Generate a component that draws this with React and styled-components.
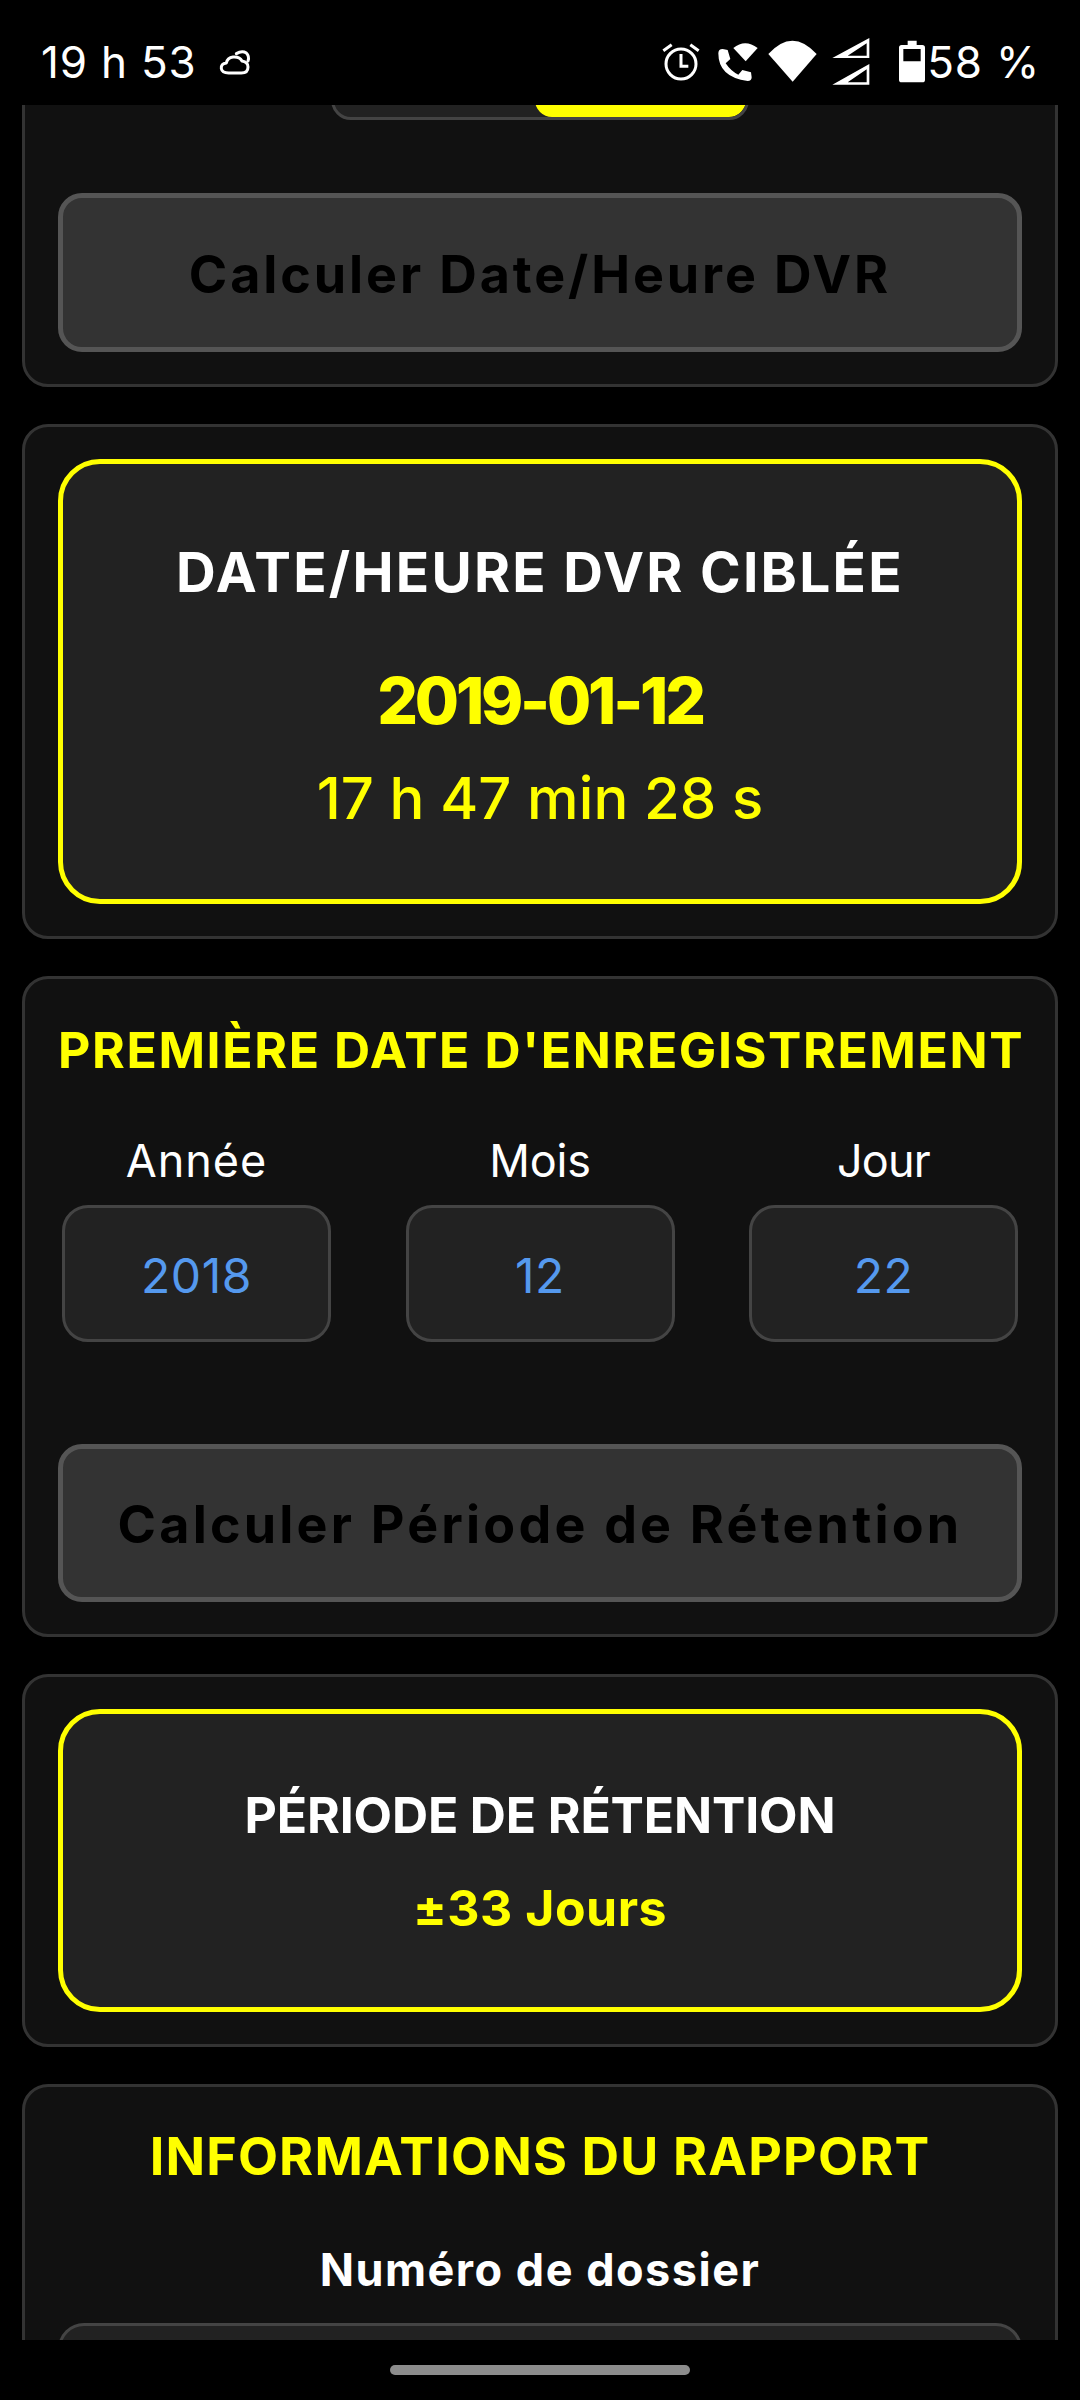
import React from 'react';
import styled, { createGlobalStyle } from 'styled-components';

const Global = createGlobalStyle`
  * { box-sizing: border-box; }
  html, body { margin: 0; padding: 0; background: #000; }
  body { font-family: Inter, "Liberation Sans", sans-serif; color: #fff; }
`;

const Screen = styled.div`
  width: 1080px;
  height: 2400px;
  display: flex;
  flex-direction: column;
  background: #000;
  overflow: hidden;
`;

const StatusBar = styled.header`
  flex: none;
  height: 105px;
  padding: 19px 40px 0 41px;
  display: flex;
  align-items: center;
  justify-content: space-between;
`;

const StatusGroup = styled.div`
  display: flex;
  align-items: center;
`;

const StatusText = styled.span`
  font-size: 44px;
  font-weight: 400;
  line-height: 56px;
  letter-spacing: 0.8px;
  white-space: nowrap;
`;

const StatusIcon = styled.svg`
  flex: none;
  display: block;
  height: ${p => p.$h || 56}px;
  width: ${p => p.$w}px;
  margin-left: ${p => p.$gap || 0}px;
  fill: #fff;
`;

const Scroller = styled.main`
  flex: none;
  height: 2235px;
  overflow: hidden;
`;

const Stack = styled.div`
  margin: -60px 22px 0;
  display: flex;
  flex-direction: column;
  gap: 37px;
`;

const Card = styled.section`
  background: #111;
  border: 3px solid #333;
  border-radius: 26px;
  padding: 32px 33px;
`;

const Toggle = styled.div`
  width: 418px;
  height: 40px;
  margin: 0 auto 73px;
  display: flex;
  justify-content: flex-end;
  background: #222;
  border: 3px solid #444;
  border-radius: 20px;
  overflow: hidden;
`;

const ToggleOn = styled.div`
  width: 211px;
  background: #ff0;
  border-radius: 20px;
`;

const ActionButton = styled.button`
  display: block;
  width: 100%;
  height: ${p => p.$h}px;
  padding: 3px 0 0;
  background: #333;
  border: 5px solid #555;
  border-radius: 24px;
  color: #000;
  font-family: inherit;
  font-size: 52px;
  font-weight: 700;
  letter-spacing: ${p => p.$ls}px;
  white-space: nowrap;
`;

const ResultBox = styled.div`
  background: #222;
  border: 5px solid #ff0;
  border-radius: 42px;
  text-align: center;
  padding: ${p => p.$pad};
`;

const ResultTitle = styled.h2`
  margin: 0;
  font-size: ${p => p.$size}px;
  font-weight: 700;
  line-height: 60px;
  letter-spacing: ${p => p.$ls}px;
  color: #fff;
  white-space: nowrap;
`;

const ResultDate = styled.div`
  margin-top: 59px;
  font-size: 64px;
  font-weight: 800;
  line-height: 80px;
  letter-spacing: -3.2px;
  color: #ff0;
`;

const ResultTime = styled.div`
  margin-top: 22px;
  font-size: 58px;
  font-weight: 500;
  line-height: 70px;
  letter-spacing: 0.1px;
  color: #ff0;
`;

const ResultValue = styled.div`
  margin-top: 33px;
  font-size: 50px;
  font-weight: 700;
  line-height: 60px;
  letter-spacing: 0.5px;
  color: #ff0;
`;

const SectionTitle = styled.h2`
  margin: ${p => p.$top}px 0 0;
  font-size: ${p => p.$size}px;
  font-weight: 700;
  line-height: 60px;
  letter-spacing: ${p => p.$ls}px;
  color: #ff0;
  text-align: center;
  white-space: nowrap;
`;

const DateRow = styled.div`
  margin: 56px 0 102px;
  padding: 0 4px;
  display: grid;
  grid-template-columns: repeat(3, 269px);
  justify-content: space-between;
`;

const Field = styled.div`
  display: flex;
  flex-direction: column;
  align-items: center;
`;

const FieldLabel = styled.label`
  font-size: 45px;
  font-weight: 400;
  line-height: 50px;
  letter-spacing: ${p => p.$ls}px;
  color: #fff;
`;

const ValueInput = styled.div`
  width: 100%;
  height: 137px;
  margin-top: 19px;
  padding-top: 3px;
  display: flex;
  align-items: center;
  justify-content: center;
  background: #222;
  border: 3px solid #444;
  border-radius: 26px;
  color: #5599ee;
  font-size: 48px;
  font-weight: 400;
  letter-spacing: 0.6px;
`;

const ReportLabel = styled.div`
  margin-top: 58px;
  font-size: 45px;
  font-weight: 700;
  line-height: 50px;
  letter-spacing: 1.5px;
  color: #fff;
  text-align: center;
`;

const WideInput = styled.div`
  height: 137px;
  margin-top: 28px;
  background: #222;
  border: 3px solid #444;
  border-radius: 26px;
`;

const NavBar = styled.footer`
  flex: 1;
  display: flex;
  justify-content: center;
  padding-top: 25px;
`;

const Handle = styled.div`
  width: 300px;
  height: 10px;
  border-radius: 5px;
  background: #8c8c8c;
`;

const CloudIcon = () => (
  <StatusIcon $w={34} $h={30} $gap={22} viewBox="600 80 102 90" style={{ fill: 'none' }} stroke="#fff" strokeWidth="9" strokeLinejoin="round" strokeLinecap="round">
    <path d="M632 158H670Q690 158 690 140Q690 125 672 122Q665 108 645 110Q628 112 625 128Q608 130 610 145Q612 158 632 158Z" />
    <path d="M655 100Q672 90 685 98Q695 108 690 122" />
  </StatusIcon>
);

const AlarmIcon = () => (
  <StatusIcon $w={38} viewBox="21 0 114 168" style={{ fill: 'none' }} stroke="#fff" strokeWidth="9">
    <circle cx="78" cy="90" r="45" />
    <path d="M78 60V97H100" />
    <path d="M25 50L50 32M106 32L131 50" />
  </StatusIcon>
);

const CallIcon = () => (
  <StatusIcon $w={44} $gap={16} viewBox="183 0 132 168">
    <path d="M190 58Q190 45 203 45L218 48L226 75L212 88Q228 112 250 122L262 108L288 115L290 130Q290 141 278 141Q190 130 190 58Z" />
    <path d="M235 42Q270 14 308 42L272 82Z" />
  </StatusIcon>
);

const WifiIcon = () => (
  <StatusIcon $w={53} $gap={6} viewBox="333 0 159 168">
    <path d="M340 60Q412 -20 485 60L413 143Z" />
  </StatusIcon>
);

const SignalIcon = () => (
  <StatusIcon $w={42} $gap={11} viewBox="15 0 126 168">
    <path fillRule="evenodd" d="M22 72L133 12V72ZM68 65H125V28Z" />
    <path fillRule="evenodd" d="M22 152L133 90V152ZM68 145H125V106Z" />
  </StatusIcon>
);

const BatteryIcon = () => (
  <StatusIcon $w={30} $gap={25} viewBox="216 0 90 168">
    <path fillRule="evenodd" d="M248 20H275V33H292Q300 33 300 41V137Q300 145 292 145H230Q222 145 222 137V41Q222 33 230 33H248ZM235 45H287V82H235Z" />
  </StatusIcon>
);

const dateFields = [
  { label: 'Année', value: '2018', ls: 1 },
  { label: 'Mois', value: '12', ls: -0.2 },
  { label: 'Jour', value: '22', ls: -0.8 },
];

export default function App() {
  return (
    <Screen>
      <Global />
      <StatusBar>
        <StatusGroup>
          <StatusText>19 h 53</StatusText>
          <CloudIcon />
        </StatusGroup>
        <StatusGroup>
          <AlarmIcon />
          <CallIcon />
          <WifiIcon />
          <SignalIcon />
          <BatteryIcon />
          <StatusText>58 %</StatusText>
        </StatusGroup>
      </StatusBar>

      <Scroller>
        <Stack>
          <Card>
            <Toggle><ToggleOn /></Toggle>
            <ActionButton $h={159} $ls={2.9}>Calculer Date/Heure DVR</ActionButton>
          </Card>

          <Card>
            <ResultBox $pad="78px 0 66px">
              <ResultTitle $size={55} $ls={2.25}>DATE/HEURE DVR CIBLÉE</ResultTitle>
              <ResultDate>2019-01-12</ResultDate>
              <ResultTime>17 h 47 min 28 s</ResultTime>
            </ResultBox>
          </Card>

          <Card>
            <SectionTitle $top={9} $size={50} $ls={1.6}>PREMIÈRE DATE D'ENREGISTREMENT</SectionTitle>
            <DateRow>
              {dateFields.map(f => (
                <Field key={f.label}>
                  <FieldLabel $ls={f.ls}>{f.label}</FieldLabel>
                  <ValueInput>{f.value}</ValueInput>
                </Field>
              ))}
            </DateRow>
            <ActionButton $h={158} $ls={3.2}>Calculer Période de Rétention</ActionButton>
          </Card>

          <Card>
            <ResultBox $pad="71px 0 69px">
              <ResultTitle $size={50} $ls={-0.15}>PÉRIODE DE RÉTENTION</ResultTitle>
              <ResultValue>±33 Jours</ResultValue>
            </ResultBox>
          </Card>

          <Card>
            <SectionTitle $top={8} $size={52} $ls={1.15}>INFORMATIONS DU RAPPORT</SectionTitle>
            <ReportLabel>Numéro de dossier</ReportLabel>
            <WideInput />
          </Card>
        </Stack>
      </Scroller>

      <NavBar><Handle /></NavBar>
    </Screen>
  );
}
